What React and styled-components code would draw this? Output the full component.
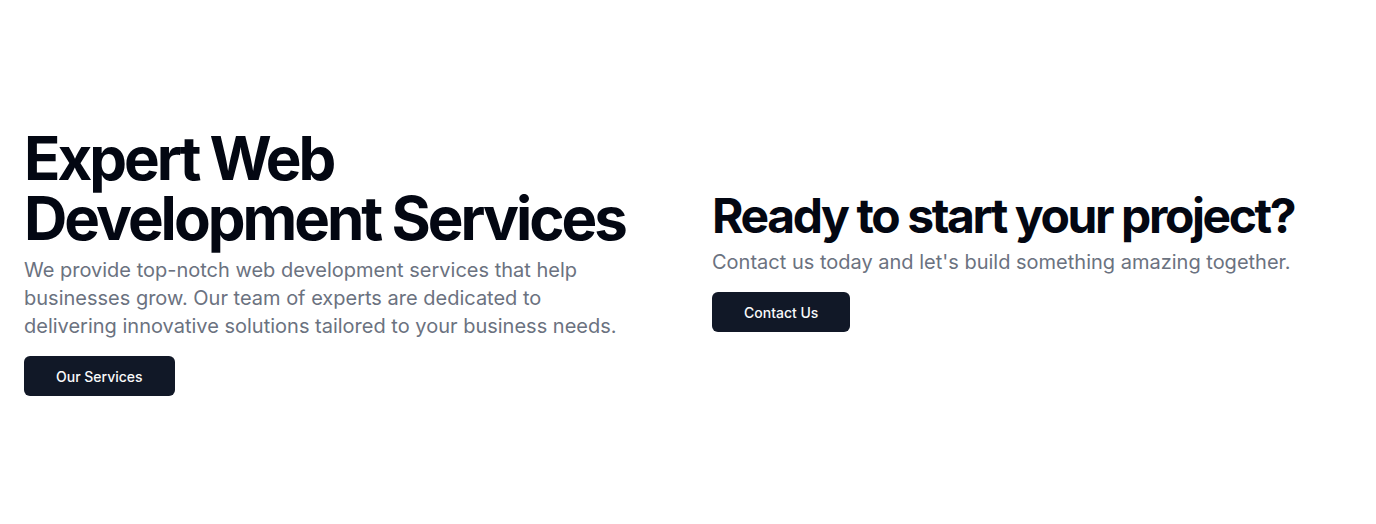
import React from 'react';
import styled, { createGlobalStyle } from 'styled-components';

const GlobalStyle = createGlobalStyle`
  * {
    box-sizing: border-box;
  }
  body {
    margin: 0;
    background: #ffffff;
    font-family: Inter, 'Noto Sans', sans-serif;
    -webkit-font-smoothing: antialiased;
  }
`;

function App() {
  return (
    <>
      <GlobalStyle />
      <Hero>
        <Grid>
          <Column>
            <TextGroup>
              <Title size="60">
                Expert Web
                <br />
                Development Services
              </Title>
              <Lead>
                We provide top-notch web development services that help businesses grow. Our team of
                experts are dedicated to delivering innovative solutions tailored to your business
                needs.
              </Lead>
            </TextGroup>
            <Actions>
              <DarkButton>Our Services</DarkButton>
            </Actions>
          </Column>
          <Column>
            <TextGroup>
              <Title size="48">Ready to start your project?</Title>
              <Lead>Contact us today and let&apos;s build something amazing together.</Lead>
            </TextGroup>
            <Actions>
              <DarkButton>Contact Us</DarkButton>
            </Actions>
          </Column>
        </Grid>
      </Hero>
    </>
  );
}

export default App;

const Hero = styled.section`
  width: 100%;
  height: 524px;
  display: flex;
  align-items: center;
  padding: 0 24px;
`;

const Grid = styled.div`
  width: 100%;
  display: grid;
  grid-template-columns: 1fr 1fr;
  gap: 48px;
  align-items: center;
`;

const Column = styled.div`
  display: flex;
  flex-direction: column;
  gap: 16px;
`;

const TextGroup = styled.div`
  display: flex;
  flex-direction: column;
  gap: 8px;
`;

const Title = styled.h1`
  margin: 0;
  font-family: Inter, 'Noto Sans', sans-serif;
  font-weight: 700;
  font-size: ${({ size }) => size}px;
  line-height: 1;
  letter-spacing: -0.05em;
  color: #030712;
`;

const Lead = styled.p`
  margin: 0;
  max-width: 600px;
  font-size: 20px;
  line-height: 28px;
  color: #6b7280;
`;

const Actions = styled.div`
  display: flex;
  gap: 8px;
`;

const DarkButton = styled.button`
  height: 40px;
  padding: 0 32px;
  border: none;
  border-radius: 6px;
  background: #111827;
  color: #f9fafb;
  font-family: Inter, 'Noto Sans', sans-serif;
  font-size: 14px;
  font-weight: 500;
  cursor: pointer;
`;
